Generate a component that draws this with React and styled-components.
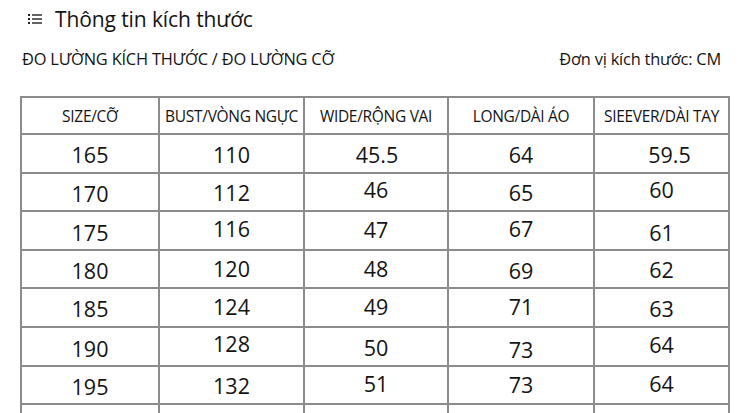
import React from 'react'
import styled, { createGlobalStyle } from 'styled-components'

const GlobalStyle = createGlobalStyle`
    html, body {
        margin: 0;
        padding: 0;
        background: #fff;
        overflow: hidden;
    }
    body {
        font-family: 'Open Sans', 'Noto Sans', sans-serif;
        color: #141414;
    }
`

const Page = styled.div`
    width: 750px;
    height: 413px;
    overflow: hidden;
    display: flex;
    flex-direction: column;

    & > * {
        flex-shrink: 0;
    }
`

const TitleBar = styled.div`
    display: flex;
    align-items: center;
    gap: 13px;
    height: 38px;
    padding-left: 28px;
`

const Title = styled.h1`
    margin: 0;
    font-size: 21px;
    font-weight: 400;
    letter-spacing: -0.1px;
`

const SubBar = styled.div`
    display: flex;
    justify-content: space-between;
    align-items: center;
    height: 40px;
    padding: 0 29px 0 22px;
    font-size: 16.4px;
    letter-spacing: -0.2px;
`

const Table = styled.table`
    margin: 18px 0 0 20px;
    border-collapse: collapse;
    table-layout: fixed;
    width: 708px;
`

const Th = styled.th`
    border: 2px solid #8c8c8c;
    height: 35px;
    padding: 0;
    font-size: 15.5px;
    font-weight: 400;
    text-align: center;
    white-space: nowrap;
    letter-spacing: -0.3px;
`

const Td = styled.td`
    border: 2px solid #8c8c8c;
    height: 36.6px;
    padding: 0;
    font-size: 21.5px;
    text-align: center;
`

const CellText = styled.span`
    position: relative;
    top: ${p => p.$dy || 0}px;
    left: ${p => p.$dx || 0}px;
`

const ListIcon = () => (
    <svg width="14" height="12" viewBox="0 0 14 12" fill="#222">
        <rect x="0" y="1" width="2" height="2" />
        <rect x="4" y="1.3" width="10" height="1.4" />
        <rect x="0" y="5" width="2" height="2" />
        <rect x="4" y="5.3" width="10" height="1.4" />
        <rect x="0" y="9" width="2" height="2" />
        <rect x="4" y="9.3" width="10" height="1.4" />
    </svg>
)

const widths = [138, 145, 144, 146, 135]
const headers = ['SIZE/CỠ', 'BUST/VÒNG NGỰC', 'WIDE/RỘNG VAI', 'LONG/DÀI ÁO', 'SIEEVER/DÀI TAY']

// [value, dy, dx] - last row is cut off by the frame, its text isn't visible
const rows = [
    [['165', 1], ['110', 1], ['45.5', 1, 1], ['64', 1], ['59.5', 1, 8]],
    [['170', 2], ['112', 1], ['46', -2], ['65', 1], ['60', -2]],
    [['175', 2], ['116', -2], ['47', -1], ['67', -2], ['61', 2]],
    [['180', 1], ['120', -1], ['48', -1], ['69', 1], ['62', 0]],
    [['185', 1], ['124', -1], ['49', -1], ['71', -1], ['63', 1]],
    [['190', 2], ['128', -3], ['50', 1], ['73', 3], ['64', -2]],
    [['195', 2], ['132', 1], ['51', -1], ['73', 0], ['64', -1]],
    [[''], [''], [''], [''], ['']],
]

const App = () => (
    <Page>
        <GlobalStyle />
        <TitleBar>
            <ListIcon />
            <Title>Thông tin kích thước</Title>
        </TitleBar>
        <SubBar>
            <span>ĐO LƯỜNG KÍCH THƯỚC / ĐO LƯỜNG CỠ</span>
            <span>Đơn vị kích thước: CM</span>
        </SubBar>
        <Table>
            <colgroup>
                {widths.map((w, i) => (
                    <col key={i} style={{ width: w }} />
                ))}
            </colgroup>
            <thead>
                <tr>
                    {headers.map(h => (
                        <Th key={h}>{h}</Th>
                    ))}
                </tr>
            </thead>
            <tbody>
                {rows.map((row, r) => (
                    <tr key={r}>
                        {row.map(([v, dy, dx], c) => (
                            <Td key={c}>
                                <CellText $dy={dy} $dx={dx}>{v}</CellText>
                            </Td>
                        ))}
                    </tr>
                ))}
            </tbody>
        </Table>
    </Page>
)

export default App
